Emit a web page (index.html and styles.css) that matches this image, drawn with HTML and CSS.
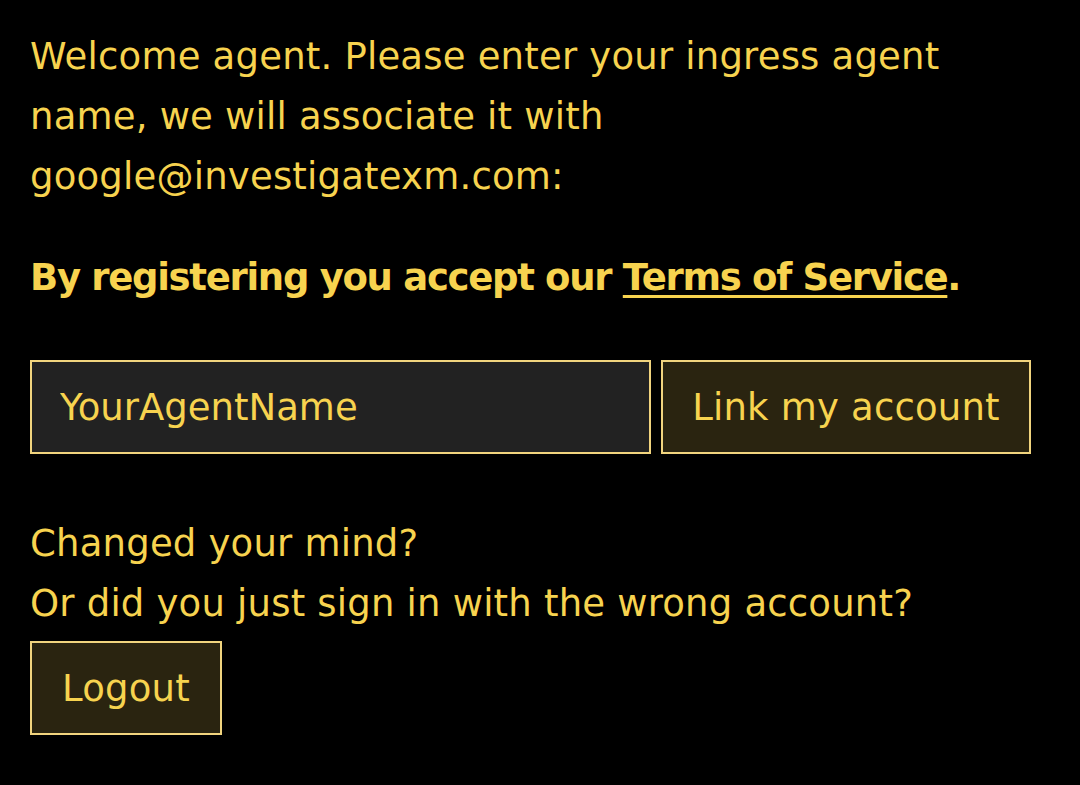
FILE: index.html
```html
<!DOCTYPE html>
<html lang="en">
<head>
    <meta charset="UTF-8">
    <meta name="viewport" content="width=device-width, initial-scale=1.0">
    <title>Link agent</title>
    <link rel="stylesheet" href="styles.css">
</head>
<body>
    <div class="page">
        <p class="intro">
            Welcome agent. Please enter your ingress agent<br>
            name, we will associate it with<br>
            google@investigatexm.com:
        </p>
        <p class="terms">
            By registering you accept our <a href="#" class="terms-link">Terms of Service</a>.
        </p>
        <form class="link-form">
            <input type="text" class="agent-input" placeholder="YourAgentName">
            <button type="button" class="btn btn-link">Link my account</button>
        </form>
        <p class="mind">
            Changed your mind?<br>
            Or did you just sign in with the wrong account?
        </p>
        <button type="button" class="btn btn-logout">Logout</button>
    </div>
</body>
</html>
```

FILE: styles.css
```css
body {
    margin: 0;
    background-color: #000;
    color: #f7d34f;
    font-family: "DejaVu Sans", sans-serif;
    font-size: 37px;
    line-height: 60px;
    letter-spacing: 0.2px;
}
.page {
    width: 1001px;
    padding: 27px 30px;
}
p {
    margin: 0;
}
.intro {
    margin-bottom: 41px;
}
.terms {
    font-weight: bold;
    letter-spacing: -1.3px;
    margin-bottom: 52px;
}
.terms-link {
    color: #f7d34f;
    text-decoration: underline;
    text-decoration-thickness: 3px;
    text-underline-offset: 5px;
}
.link-form {
    display: flex;
    gap: 10px;
    margin: 0 0 60px;
}
.agent-input {
    flex: 1;
    min-width: 0;
    height: 94px;
    box-sizing: border-box;
    padding: 0 28px;
    border: 2px solid #f1d47e;
    background-color: #222;
    color: #f7d34f;
    font-family: inherit;
    font-size: 37px;
    outline: none;
}
.agent-input::placeholder {
    color: #f7d34f;
    opacity: 1;
}
.btn {
    height: 94px;
    box-sizing: border-box;
    padding: 0 30px;
    border: 2px solid #f1d47e;
    background-color: #2a2410;
    color: #f7d34f;
    font-family: inherit;
    font-size: 37px;
    letter-spacing: 0.2px;
    cursor: pointer;
}
.btn-link {
    width: 370px;
    padding: 0;
}
.mind {
    margin-bottom: 7px;
}
```
